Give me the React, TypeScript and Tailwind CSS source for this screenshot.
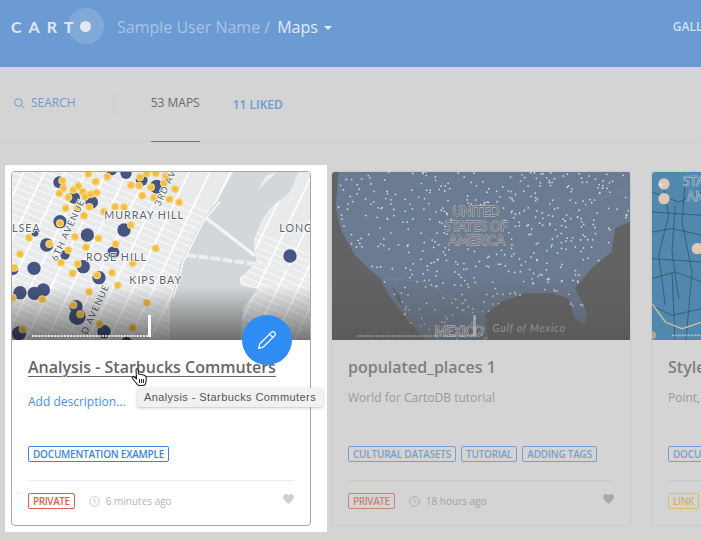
import { Pencil } from "lucide-react";

const navy: number[][] = [[178,52,18],[222,98,18],[275,112,19],[378,25,17],[470,65,21],[425,45,18],[180,170,20],[372,195,20],[262,210,20],[140,240,20],[340,262,18],[195,270,14],[102,310,20],[250,305,20],[297,338,20],[60,383,20],[103,385,20],[130,375,20],[228,425,20],[232,455,25],[312,500,20],[57,505,21],[870,273,20],[40,315,15],[380,530,15],[105,205,10],[335,15,16]];
const yellow: number[][] = [[187,47],[190,70],[178,85],[205,97],[220,75],[235,63],[248,80],[255,95],[272,88],[290,83],[287,50],[322,35],[265,27],[197,130],[232,127],[268,126],[252,152],[312,140],[345,125],[372,127],[393,60],[417,62],[420,37],[440,25],[467,25],[453,67],[497,33],[492,55],[525,72],[427,92],[462,98],[508,103],[537,112],[180,175],[393,180],[87,218],[225,215],[295,220],[148,237],[347,237],[258,247],[467,250],[205,255],[60,267],[183,293],[233,297],[398,295],[43,308],[218,325],[291,331],[336,323],[353,361],[267,380],[127,403],[38,398],[440,413],[220,420],[241,448],[298,477],[398,488],[68,493]];

const avenues = Array.from({ length: 22 }, (_, i) => i * 62 - 250);
const streets = Array.from({ length: 46 }, (_, i) => i * 21 - 120);

function hash(n: number) {
  const x = Math.sin(n * 127.1 + 11.7) * 43758.5453;
  return x - Math.floor(x);
}

const usLand: number[][] = [[40,21],[32,130],[50,200],[90,270],[130,310],[165,340],[195,395],[240,455],[300,525],[490,525],[480,450],[530,410],[600,385],[680,385],[730,400],[750,460],[780,480],[785,440],[750,370],[800,310],[860,260],[870,190],[915,170],[915,21]];

function inPoly(x: number, y: number, p: number[][]) {
  let c = false;
  for (let i = 0, j = p.length - 1; i < p.length; j = i++) {
    if (p[i][1] > y !== p[j][1] > y && x < ((p[j][0] - p[i][0]) * (y - p[i][1])) / (p[j][1] - p[i][1]) + p[i][0]) c = !c;
  }
  return c;
}

const usDots = Array.from({ length: 760 }, (_, i) => [21 + hash(i) * 894, 21 + hash(i + 5000) * 504]).filter(([x, y]) => inPoly(x, y, usLand) && (x > 240 || hash(x) > 0.35) && !(x > 380 && x < 530 && y > 120 && y < 245));

function ScaleBar({ color }: { color: string }) {
  return (
    <>
      <line x1="96" y1="513" x2="445" y2="513" stroke={color} strokeWidth="5" strokeDasharray="7 2.5" />
      <rect x="444" y="450" width="9" height="66" fill={color} />
    </>
  );
}

function NycMap() {
  return (
    <svg viewBox="36 21 894 504" preserveAspectRatio="none" className="block h-[168px] w-full">
      <defs>
        <linearGradient id="shade" x1="0" y1="0" x2="0" y2="1">
          <stop offset="0.68" stopColor="#000" stopOpacity="0" />
          <stop offset="1" stopColor="#000" stopOpacity="0.5" />
        </linearGradient>
      </defs>
      <rect x="36" y="21" width="894" height="504" fill="#e9eaeb" />
      <g stroke="#fff">
        {avenues.map((a) => (
          <line key={a} x1={a} y1="560" x2={a + 270} y2="0" strokeWidth="5" />
        ))}
        {streets.map((s) => (
          <line key={s} x1="0" y1={s} x2="1000" y2={s + 420} strokeWidth="2.5" />
        ))}
      </g>
      <path d="M700 21 L895 21 L870 80 L810 130 L785 165 L760 230 L770 290 L720 340 L722 362 L775 372 L730 425 L720 525 L510 525 L510 420 L540 300 L600 180 L650 110 Z" fill="#d4d7d9" />
      <path d="M770 80 L830 21 L800 30 Z" fill="#eceded" />
      <path d="M620 160 L765 272" stroke="#f4f4f4" strokeWidth="10" fill="none" />
      <path d="M560 270 L885 312" stroke="#eceded" strokeWidth="12" fill="none" strokeDasharray="30 6" />
      <path d="M520 400 L550 290 L610 170 L660 110" stroke="#fff" strokeWidth="4" fill="none" />
      {navy.map(([x, y, r], i) => (
        <circle key={i} cx={x} cy={y} r={r} fill="#44557f" />
      ))}
      {yellow.map(([x, y], i) => (
        <g key={i}>
          <circle cx={x} cy={y} r="12" fill="#f9d77e" />
          <circle cx={x} cy={y} r="8.5" fill="#f4bd45" />
        </g>
      ))}
      <g fontFamily="Lato, sans-serif" fill="#5a616b" stroke="#fff" strokeWidth="4" paintOrder="stroke" fontSize="32" letterSpacing="3">
        <text x="313" y="162">MURRAY HILL</text>
        <text x="258" y="288">ROSE HILL</text>
        <text x="388" y="358">KIPS BAY</text>
        <text x="36" y="200">LSEA</text>
        <text x="838" y="200">LONG</text>
        <text transform="translate(480,125) rotate(-65)" fontSize="28">3RD AVE</text>
        <text transform="translate(170,290) rotate(-65)" fontSize="28">6TH AVENUE</text>
        <text transform="translate(260,510) rotate(-65)" fontSize="28">D AVENUE</text>
      </g>
      <rect x="36" y="21" width="894" height="504" fill="url(#shade)" />
      <ScaleBar color="#fff" />
    </svg>
  );
}

function UsMap() {
  return (
    <svg viewBox="21 21 894 504" preserveAspectRatio="none" className="block h-[168px] w-full">
      <defs>
        <linearGradient id="shade2" x1="0" y1="0" x2="0" y2="1">
          <stop offset="0.6" stopColor="#555" stopOpacity="0" />
          <stop offset="1" stopColor="#555" stopOpacity="0.6" />
        </linearGradient>
      </defs>
      <rect x="21" y="21" width="894" height="504" fill="#636363" />
      <path d={"M" + usLand.map((p) => p.join(" ")).join(" L") + " Z"} fill="#6b7b92" />
      <path d="M200 360 L225 395 L235 430 L215 400 Z M30 21 L38 21 L34 60 Z" fill="#636363" />
      <path d="M180 340 L300 350 L370 395 L440 420 L490 470 M660 60 L730 21 M740 150 L830 100 L915 70" stroke="#7d8493" strokeWidth="3" fill="none" />
      {usDots.map(([x, y], i) => (
        <circle key={i} cx={x} cy={y} r="2.6" fill="#d8d8da" />
      ))}
      <rect x="21" y="21" width="894" height="504" fill="url(#shade2)" />
      <g fontFamily="Lato, sans-serif" fill="#6f6f75" stroke="#c9c9c9" strokeWidth="2.5" paintOrder="stroke" fontSize="38" textAnchor="middle">
        <text x="453" y="152">UNITED</text>
        <text x="453" y="197">STATES OF</text>
        <text x="455" y="241">AMERICA</text>
        <text x="402" y="512">MEXICO</text>
      </g>
      <text x="502" y="500" fontFamily="Lato, sans-serif" fontStyle="italic" fontSize="32" fill="#8c8f94" letterSpacing="2">Gulf of Mexico</text>
      <g opacity="0.45">
        <ScaleBar color="#ddd" />
      </g>
    </svg>
  );
}

function StyleMap() {
  const roads = ["M0 60 L80 90 L150 60", "M0 180 L60 170 L150 190", "M30 21 L50 130 L20 250 L40 400", "M100 21 L90 150 L120 300 L100 525", "M0 320 L70 300 L150 330", "M0 400 L60 430 L150 410", "M60 300 L70 525", "M0 260 L150 270", "M70 100 L60 240 L80 380", "M0 120 L150 130"];
  return (
    <svg viewBox="0 0 894 504" preserveAspectRatio="none" className="block h-[168px] w-full">
      <rect width="894" height="504" fill="#5288ad" />
      {roads.map((d) => (
        <path key={d} d={d} stroke="#34556f" strokeWidth="2.5" fill="none" />
      ))}
      <path d="M0 395 L40 450 L90 470 L150 450" stroke="#c7c39d" strokeWidth="4" fill="none" />
      <circle cx="36" cy="36" r="17" fill="#e0c9b4" />
      <circle cx="27" cy="38" r="6" fill="#d7e0e6" />
      <circle cx="36" cy="80" r="17" fill="#e0c9b4" />
      <circle cx="136" cy="230" r="17" fill="#e0c9b4" />
      <circle cx="0" cy="490" r="12" fill="#b5a28f" />
      <g fontFamily="Lato, sans-serif" fill="#6b93b0" stroke="#d4dde2" strokeWidth="2" paintOrder="stroke" fontSize="38">
        <text x="92" y="42">STA</text>
        <text x="104" y="86">AM</text>
      </g>
      <line x1="60" y1="490" x2="150" y2="490" stroke="#ddd" strokeWidth="5" strokeDasharray="7 2.5" opacity="0.6" />
    </svg>
  );
}

function Clock({ color }: { color: string }) {
  return (
    <svg width="11" height="11" viewBox="0 0 12 12" fill="none" stroke={color} strokeWidth="1">
      <circle cx="6" cy="6" r="5.2" />
      <path d="M6 3v3.2l2 1" />
    </svg>
  );
}

function Heart({ color }: { color: string }) {
  return (
    <svg width="11" height="10" viewBox="0 0 24 22" fill={color}>
      <path d="M12 22 C4 15 0 11 0 6.5 C0 2.5 3 0 6.5 0 C9 0 11 1.3 12 3.2 C13 1.3 15 0 17.5 0 C21 0 24 2.5 24 6.5 C24 11 20 15 12 22 Z" />
    </svg>
  );
}

type CardProps = {
  map: React.ReactNode;
  title: string;
  desc: string;
  tags: string[];
  badge: string;
  time: string;
  active?: boolean;
};

function Card({ map, title, desc, tags, badge, time, active }: CardProps) {
  const tagCls = active ? "border-[#3b87d6] text-[#3b87d6]" : "border-[#7a9fcb] text-[#7a9fcb]";
  const badgeCls = badge === "LINK"
    ? "border-[#dcbc6a] text-[#d3b467]"
    : active
      ? "border-[#dc5f4b] text-[#dc5f4b]"
      : "border-[#c88278] text-[#c88278]";
  return (
    <div className={`relative flex h-[355px] w-[300px] shrink-0 flex-col rounded border ${active ? "border-[#a8a8a8] bg-white" : "border-[#c9c9c9] bg-[#d4d4d4]"}`}>
      <div className="h-[168px] overflow-hidden rounded-t-[3px]">{map}</div>
      <div className="flex flex-1 flex-col px-4">
        <h2 className={`mt-[15px] whitespace-nowrap text-[16px] leading-[24px] font-semibold ${active ? "text-[#666] underline decoration-1 underline-offset-[3px]" : "text-[#7f7f7f]"}`}>{title}</h2>
        <p className={`whitespace-nowrap text-[12px] leading-[18px] ${active ? "mt-[14px] text-[#4a90e2]" : "mt-[10px] text-[#9a9a9a]"}`}>{desc}</p>
        <div className={`flex gap-[5px] ${active ? "mt-[35px]" : "mt-[39px]"}`}>
          {tags.map((t) => (
            <span key={t} className={`h-4 whitespace-nowrap rounded-[2px] border px-1 text-[10px] leading-[14px] font-semibold tracking-[-0.22px] ${tagCls}`}>{t}</span>
          ))}
        </div>
        <div className={`mt-[18px] flex items-center border-t pt-3 ${active ? "border-[#eeeeee]" : "border-[#cbcbcb]"}`}>
          <span className={`h-4 rounded-[2px] border px-1 text-[10px] leading-[14px] font-semibold tracking-[-0.42px] ${badgeCls}`}>{badge}</span>
          <span className="ml-[14px] flex"><Clock color={active ? "#c4c4c4" : "#a9a9a9"} /></span>
          <span className={`ml-[6px] whitespace-nowrap text-[10px] leading-4 ${active ? "text-[#b5b5b5]" : "text-[#a3a3a3]"}`}>{time}</span>
          <span className="ml-auto -mt-1 flex"><Heart color={active ? "#cfcfcf" : "#a9a9a9"} /></span>
        </div>
      </div>
    </div>
  );
}

export default function App() {
  return (
    <div className="h-[539px] w-[701px] overflow-hidden bg-[#d4d4d4] font-['Open_Sans',sans-serif]">
      <header className="flex h-[67px] items-start bg-[#6c9ad2] pt-[13px]">
        <div className="relative ml-[11px] flex h-7 w-[92px] items-center">
          <span className="text-[16px] font-bold tracking-[7px] text-[#e3e9f2] font-['Lato',sans-serif]">CART</span>
          <span className="absolute left-[57px] top-[-5px] h-9 w-9 rounded-full bg-white/15" />
          <span className="absolute left-[69px] top-[8px] h-[11px] w-[11px] rounded-full bg-[#e3e9f2]" />
        </div>
        <div className="ml-[14px] flex h-7 items-center text-[16px] whitespace-nowrap">
          <span className="text-[#a9c4e6]">Sample User Name /</span>
          <span className="ml-[7px] text-[#e3eaf4]">Maps</span>
          <span className="ml-[6px] mt-[2px] h-0 w-0 border-x-[4px] border-t-[4px] border-x-transparent border-t-[#e3eaf4]" />
        </div>
        <span className="ml-auto mr-[-23px] mt-[4px] text-[12px] leading-5 font-semibold whitespace-nowrap text-[#d3dff0]">GALLERY</span>
      </header>

      <div className="flex h-[75px] items-start border-b border-[#cecece] pl-[14px]">
        <svg className="mt-[31px]" width="11" height="11" viewBox="0 0 11 11" fill="none" stroke="#6f9acb" strokeWidth="1">
          <circle cx="4.5" cy="4.5" r="3.8" />
          <path d="M7.3 7.3 L10.5 10.5" />
        </svg>
        <span className="ml-[6px] mt-[27px] text-[12px] leading-[18px] font-medium text-[#6f9acb]">SEARCH</span>
        <span className="ml-[37px] mt-[26px] h-[22px] w-px bg-[#cdcdcd]" />
        <div className="relative ml-[37px] h-full">
          <span className="mt-[27px] block text-[12px] leading-[18px] font-medium text-[#6a6a6a]">53 MAPS</span>
          <span className="absolute -bottom-px left-0 right-0 h-px bg-[#777]" />
        </div>
        <span className="ml-[33px] mt-[29px] text-[12px] leading-[18px] font-semibold text-[#6f9acb]">11 LIKED</span>
      </div>

      <div className="mt-[23px] flex items-start pl-[5px]">
        <div className="relative shrink-0 bg-white pb-[6px] pl-[6px] pr-[16px] pt-[6px]">
          <Card active map={<NycMap />} title="Analysis - Starbucks Commuters" desc="Add description..." tags={["DOCUMENTATION EXAMPLE"]} badge="PRIVATE" time="6 minutes ago" />
          <span className="absolute left-[237px] top-[150px] flex h-[50px] w-[50px] items-center justify-center rounded-full bg-[#2f8cf2]">
            <Pencil size={20} color="#fff" strokeWidth={1.5} />
          </span>
          <svg className="absolute left-[126px] top-[203px]" width="17" height="19" viewBox="0 0 17 19">
            <path d="M5 1.5 C5 .5 7 .5 7 1.5 L7.6 6 L12.5 7 C14.5 7.5 15.5 8.5 15.3 11 L14.7 15 C14.5 16.5 13.5 17.5 12 17.5 L8.5 17.5 C7 17.5 6.5 16.5 5.5 15.5 L1.5 10.5 C.5 9.2 2 8 3.3 9 L5.6 11 Z" fill="#fff" stroke="#222" strokeWidth="1.1" strokeLinejoin="round" />
            <path d="M8.5 11 V15 M10.5 11 V15 M12.5 11 V15" stroke="#222" strokeWidth="1" />
          </svg>
          <span className="absolute left-[132px] top-[223px] h-[19px] w-[186px] rounded-[2px] bg-[#f1f1f1] text-center text-[11px] leading-[19px] tracking-[0.42px] whitespace-nowrap text-[#555] shadow-[0_1px_3px_rgba(0,0,0,0.25)] font-['Liberation_Sans',sans-serif]">Analysis - Starbucks Commuters</span>
        </div>
        <div className="ml-[4px] mt-[6px] flex gap-5">
          <Card map={<UsMap />} title="populated_places 1" desc="World for CartoDB tutorial" tags={["CULTURAL DATASETS", "TUTORIAL", "ADDING TAGS"]} badge="PRIVATE" time="18 hours ago" />
          <Card map={<StyleMap />} title="Styled by Value" desc="Point, line and polygon" tags={["DOCUMENTATION EXAMPLE"]} badge="LINK" time="2 days ago" />
        </div>
      </div>
    </div>
  );
}
